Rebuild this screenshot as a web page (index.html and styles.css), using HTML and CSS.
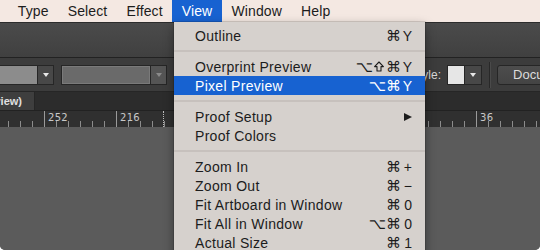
FILE: index.html
```html
<!DOCTYPE html>
<html>
<head>
<meta charset="utf-8">
<link rel="stylesheet" href="styles.css">
</head>
<body>
<div class="screen">
  <div class="menubar">
    <span class="mi cut">Object</span>
    <span class="mi">Type</span>
    <span class="mi">Select</span>
    <span class="mi">Effect</span>
    <span class="mi active">View</span>
    <span class="mi">Window</span>
    <span class="mi">Help</span>
  </div>
  <div class="toolbar"></div>
  <div class="controls">
    <div class="dd dd1"><div class="field"></div><div class="arrow"><i class="tri"></i></div></div>
    <div class="dd dd2"><div class="field"></div><div class="arrow"><i class="tri dim"></i></div></div>
    <span class="label">Style:</span>
    <div class="dd swatch"><div class="sw"></div><div class="arrow"><i class="tri"></i></div></div>
    <div class="vsep"></div>
    <div class="btn">Document Setup</div>
  </div>
  <div class="tabs"><div class="tab"><span>Untitled-1 @ 100% (CMYK/Preview)</span></div></div>
  <div class="ruler">
    <div class="mark"><span>252</span></div>
    <div class="mark"><span>216</span><i class="dots"></i></div>
    <div class="mark"></div>
    <div class="mark"></div>
    <div class="mark"></div>
    <div class="mark"></div>
    <div class="mark"><span>36</span></div>
  </div>
  <div class="canvas"></div>

  <div class="menu">
    <div class="item"><span>Outline</span><span class="key"><span class="mods">⌘</span><span class="k">Y</span></span></div>
    <div class="sep"></div>
    <div class="item"><span>Overprint Preview</span><span class="key"><span class="mods">⌥</span><svg class="shift" width="10" height="11" viewBox="0 0 10 11"><path d="M5 1 L9.4 5.6 H7 V10 H3 V5.6 H0.6 Z" fill="none" stroke="currentColor" stroke-width="1.1" stroke-linejoin="round"/></svg><span class="mods">⌘</span><span class="k">Y</span></span></div>
    <div class="item hl"><span>Pixel Preview</span><span class="key"><span class="mods">⌥⌘</span><span class="k">Y</span></span></div>
    <div class="sep"></div>
    <div class="item"><span>Proof Setup</span><i class="sub"></i></div>
    <div class="item"><span>Proof Colors</span></div>
    <div class="sep"></div>
    <div class="item"><span>Zoom In</span><span class="key"><span class="mods">⌘</span><span class="k">+</span></span></div>
    <div class="item"><span>Zoom Out</span><span class="key"><span class="mods">⌘</span><span class="k">−</span></span></div>
    <div class="item"><span>Fit Artboard in Window</span><span class="key"><span class="mods">⌘</span><span class="k">0</span></span></div>
    <div class="item"><span>Fit All in Window</span><span class="key"><span class="mods">⌥⌘</span><span class="k">0</span></span></div>
    <div class="item"><span>Actual Size</span><span class="key"><span class="mods">⌘</span><span class="k">1</span></span></div>
  </div>
</div>
</body>
</html>
```
FILE: styles.css
```css
html, body {
  margin: 0;
  background: #ffffff;
}

.screen {
  width: 540px;
  height: 250px;
  position: relative;
  overflow: hidden;
  border-radius: 0 0 5px 5px;
  background: #5b5b5b;
  display: flex;
  flex-direction: column;
  font-family: "Liberation Sans", Arial, "DejaVu Sans", sans-serif;
}

/* ---------- menu bar ---------- */
.menubar {
  height: 22px;
  flex: none;
  display: flex;
  align-items: center;
  background: #f4e8e2;
  color: #1c1c1c;
  font-size: 14px;
  letter-spacing: 0.1px;
  white-space: nowrap;
}

.mi {
  height: 22px;
  line-height: 22px;
  padding: 0 9.6px;
}

.mi.cut {
  margin-left: -52px;
}

.mi.active {
  background: #1762d1;
  color: #ffffff;
}

/* ---------- top toolbar ---------- */
.toolbar {
  height: 34px;
  flex: none;
  border-top: 1px solid #2c2c2c;
  border-bottom: 1px solid #222222;
  background: linear-gradient(#4b4b4b, #404040);
}

/* ---------- control bar ---------- */
.controls {
  height: 33px;
  flex: none;
  display: flex;
  align-items: center;
  background: #3c3c3c;
  border-bottom: 1px solid #262626;
  white-space: nowrap;
}

.dd {
  box-sizing: border-box;
  height: 20px;
  display: flex;
  flex: none;
  border: 1px solid #262626;
}

.dd .field {
  flex: 1;
}

.dd .arrow {
  width: 15px;
  flex: none;
  display: flex;
  align-items: center;
  justify-content: center;
  background: #484848;
  border-left: 1px solid #262626;
}

.tri {
  width: 0;
  height: 0;
  border-left: 3.5px solid transparent;
  border-right: 3.5px solid transparent;
  border-top: 4px solid #e8e8e8;
}

.tri.dim {
  border-top-color: #8a8a8a;
}

.dd1 {
  width: 55px;
  margin-left: -1px;
}

.dd1 .field {
  background: #8c8c8c;
}

.dd2 {
  width: 106px;
  margin-left: 7px;
}

.dd2 .field {
  background: #6a6a6a;
  box-shadow: inset 0 0 0 1px #7a7a7a;
}

.dd2 .arrow {
  background: #555555;
}

.label {
  margin-left: 244px;
  font-size: 12px;
  color: #d8d8d8;
}

.swatch {
  width: 35px;
  margin-left: 6px;
}

.swatch .sw {
  width: 18px;
  background: #e6e6e6;
}

.swatch .arrow {
  width: 16px;
}

.vsep {
  width: 1px;
  height: 26px;
  margin-left: 7px;
  background: #282828;
  box-shadow: 1px 0 0 #4a4a4a;
  flex: none;
}

.btn {
  box-sizing: border-box;
  width: 120px;
  height: 20px;
  margin-left: 7px;
  flex: none;
  padding-left: 15px;
  line-height: 18px;
  font-size: 13px;
  color: #dcdcdc;
  border: 1px solid #262626;
  border-radius: 3px;
  background: linear-gradient(#4d4d4d, #444444);
}

/* ---------- document tabs ---------- */
.tabs {
  height: 18px;
  flex: none;
  display: flex;
  background: #2c2c2c;
  border-bottom: 1px solid #222222;
}

.tab {
  box-sizing: border-box;
  width: 35px;
  display: flex;
  justify-content: flex-end;
  align-items: center;
  overflow: hidden;
  padding-right: 12px;
  background: #3e3e3e;
  border-right: 1px solid #262626;
  white-space: nowrap;
  font-size: 11px;
  font-weight: bold;
  color: #e0e0e0;
}

/* ---------- ruler ---------- */
.ruler {
  height: 16px;
  flex: none;
  display: flex;
  padding-left: 44px;
  background-color: #303030;
  background-image: repeating-linear-gradient(to right, transparent 0 8px, #8c8c8c 8px 9px, transparent 9px 12px);
  background-size: 100% 6px;
  background-position: left bottom;
  background-repeat: no-repeat;
}

.mark {
  box-sizing: border-box;
  width: 72px;
  flex: none;
  display: grid;
  grid-template-columns: 46px 1px;
  border-left: 1px solid #9a9a9a;
  font-family: "DejaVu Sans", sans-serif;
  font-size: 10px;
  color: #c8c8c8;
  letter-spacing: 0.3px;
}

.mark span {
  padding-left: 3px;
  line-height: 13px;
}

.dots {
  grid-column: 2;
  border-left: 1px dotted #bdbdbd;
}

.canvas {
  flex: 1;
  background: #5b5b5b;
}

/* ---------- dropdown menu ---------- */
.menu {
  position: absolute;
  left: 174px;
  top: 22px;
  width: 251px;
  height: 240px;
  box-sizing: border-box;
  padding-top: 4px;
  background: #d6d1cd;
  box-shadow: 0 4px 10px rgba(0, 0, 0, 0.4), 0 0 0 0.5px rgba(0, 0, 0, 0.25);
  color: #1c1c1c;
  font-size: 14px;
  letter-spacing: 0.3px;
  white-space: nowrap;
}

.item {
  height: 19px;
  display: flex;
  align-items: center;
  padding: 0 13px 0 21px;
}

.item.hl {
  background: #1762d1;
  color: #ffffff;
}

.sep {
  height: 2px;
  margin: 5px 0;
  background: #c7c1bd;
}

.key {
  margin-left: auto;
  display: flex;
  align-items: center;
  font-size: 14px;
}

.key .mods {
  font-family: "DejaVu Sans", sans-serif;
  font-size: 15px;
  letter-spacing: 0;
}

.key .shift {
  margin: 0 2px 0 1px;
  flex: none;
}

.key .k {
  width: 10px;
  margin-left: 1px;
  text-align: right;
  letter-spacing: 0;
}

.sub {
  margin-left: auto;
  width: 0;
  height: 0;
  border-left: 8px solid #1c1c1c;
  border-top: 4.5px solid transparent;
  border-bottom: 4.5px solid transparent;
}
```
